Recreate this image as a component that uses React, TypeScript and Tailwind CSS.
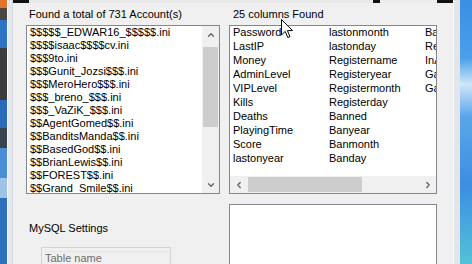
import React from 'react';
import { ChevronUp, ChevronDown, ChevronLeft, ChevronRight } from 'lucide-react';

const ACCOUNTS = [
  "$$$$$_EDWAR16_$$$$$.ini",
  "$$$$isaac$$$$cv.ini",
  "$$$9to.ini",
  "$$$Gunit_Jozsi$$$.ini",
  "$$$MeroHero$$$.ini",
  "$$$_breno_$$$.ini",
  "$$$_VaZiK_$$$.ini",
  "$$AgentGomed$$.ini",
  "$$BanditsManda$$.ini",
  "$$BasedGod$$.ini",
  "$$BrianLewis$$.ini",
  "$$FOREST$$.ini",
  "$$Grand_Smile$$.ini",
];

const COLUMNS = [
  ["Password", "LastIP", "Money", "AdminLevel", "VIPLevel", "Kills", "Deaths", "PlayingTime", "Score", "lastonyear"],
  ["lastonmonth", "lastonday", "Registername", "Registeryear", "Registermonth", "Registerday", "Banned", "Banyear", "Banmonth", "Banday"],
  ["Banreason", "Reason", "InAdmin", "Gang", "GangRank"],
];

export default function App() {
  return (
    <div
      className="relative flex w-[472px] h-[264px] overflow-hidden bg-[#f0f0f0] text-[11px] text-black"
      style={{ fontFamily: '"Liberation Sans", Arial, sans-serif' }}
    >
      {/* desktop strip on the left */}
      <div className="flex flex-col w-[7px] shrink-0">
        <div className="h-[8px] bg-[#e0742a]" />
        <div className="h-[12px] bg-[#4b4844]" />
        <div className="h-[28px] bg-[#2f73c4]" />
        <div className="h-[52px] bg-[#3c3c3e]" />
        <div className="h-[28px] bg-[#2a6ab8]" />
        <div className="h-[20px] bg-[#3a4350]" />
        <div className="h-[30px] bg-[#4a8ed6]" />
        <div className="h-[20px] bg-[#9dc4e6]" />
        <div className="flex-1 bg-[#2d6fb8]" />
      </div>
      {/* window frame */}
      <div className="w-[6px] shrink-0 bg-[#e4e8ed] border-l border-[#f7f9fb] border-r border-r-[#d6dadf]" />

      {/* window content */}
      <div className="flex flex-col w-[440px] shrink-0">
        <div className="flex h-[4px] bg-[#111] pl-[16px] gap-[7px]">
          <div className="w-[344px] h-[3px] bg-[#e9e9e9]" />
          <div className="w-[57px] h-[3px] bg-[#ececec]" />
        </div>

        <div className="grid grid-cols-[194px_208px] gap-x-[9px] pl-[13px]">
          <div className="h-[22px] pt-[5px] pl-[3px] leading-[13px]">Found a total of 731 Account(s)</div>
          <div className="h-[22px] pt-[5px] pl-[4px] leading-[13px]">25 columns Found</div>

          {/* accounts list */}
          <div className="flex h-[169px] bg-white border border-[#828790]">
            <div className="flex-1 pl-[3px] overflow-hidden">
              {ACCOUNTS.map(a => (
                <div key={a} className="h-[13px] leading-[13px] whitespace-nowrap">{a}</div>
              ))}
            </div>
            <div className="flex flex-col w-[17px] bg-[#f0f0f0]">
              <div className="h-[17px] flex items-center justify-center text-[#606060]">
                <ChevronUp size={10} strokeWidth={3} />
              </div>
              <div className="mt-[4px] mx-[1px] h-[80px] bg-[#cdcdcd]" />
              <div className="flex-1" />
              <div className="h-[17px] flex items-center justify-center text-[#606060]">
                <ChevronDown size={10} strokeWidth={3} />
              </div>
            </div>
          </div>

          {/* columns list */}
          <div className="flex flex-col h-[169px] bg-white border border-[#828790]">
            <div className="flex-1 grid grid-cols-[96px_96px_96px] pl-[3px] overflow-hidden">
              {COLUMNS.map((col, i) => (
                <div key={i} className="whitespace-nowrap">
                  {col.map(c => (
                    <div key={c} className="h-[14px] leading-[13px]">{c}</div>
                  ))}
                </div>
              ))}
            </div>
            <div className="flex h-[17px] bg-[#f0f0f0]">
              <div className="w-[17px] flex items-center justify-center text-[#606060]">
                <ChevronLeft size={10} strokeWidth={3} />
              </div>
              <div className="ml-[1px] my-[1px] w-[114px] bg-[#cdcdcd]" />
              <div className="flex-1" />
              <div className="w-[17px] flex items-center justify-center text-[#606060]">
                <ChevronRight size={10} strokeWidth={3} />
              </div>
            </div>
          </div>

          {/* MySQL settings */}
          <div className="flex flex-col">
            <div className="mt-[28px] pl-[3px] leading-[13px]">MySQL Settings</div>
            <div className="mt-[12px] ml-[15px] w-[130px] h-[30px] border border-[#d4d4d4] bg-[#f0f0f0] pt-[3px] pl-[3px]">
              <div className="text-[#6d6d6d] leading-[13px] border-t border-[#e6e6e6]">Table name</div>
            </div>
          </div>
          <div className="mt-[10px] h-[70px] bg-white border border-[#828790]" />
        </div>
      </div>

      {/* window frame right */}
      <div className="w-[7px] shrink-0 bg-[#e2e6eb] border-l border-[#f8fafc]" />
      {/* desktop strip right */}
      <div className="flex-1 bg-[linear-gradient(180deg,#3b8fe4_0%,#4aa0ea_22%,#cfe6f8_32%,#5aa6ea_44%,#3c8ee2_70%,#53c2d8_100%)]" />

      {/* mouse cursor */}
      <svg className="absolute left-[281px] top-[19px]" width="13" height="20" viewBox="0 0 13 20">
        <path d="M0.5 0.5 L0.5 16 L4.2 12.4 L6.8 18.6 L9 17.6 L6.4 11.6 L11.5 11.6 Z" fill="white" stroke="black" strokeWidth="1" strokeLinejoin="miter" />
      </svg>
    </div>
  );
}
